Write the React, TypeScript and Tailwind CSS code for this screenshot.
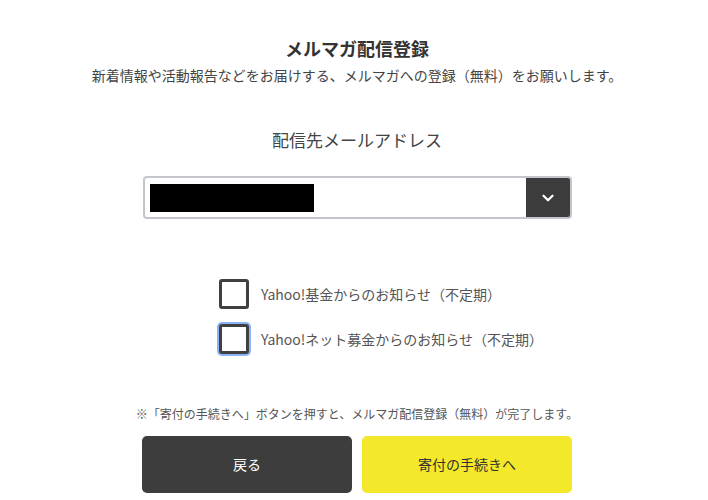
import { ChevronDown } from "lucide-react";

export default function App() {
  return (
    <div
      className="w-[708px] h-[500px] bg-white text-[#333] overflow-hidden"
      style={{ fontFamily: '"Noto Sans CJK JP", "Noto Sans", sans-serif' }}
    >
      <div className="flex flex-col items-center pt-[35px] pl-[6px]">
        <h1 className="text-[18px] leading-[27px] font-bold">メルマガ配信登録</h1>
        <p className="mt-[3px] text-[14px] leading-[20px] text-[#444]">
          新着情報や活動報告などをお届けする、メルマガへの登録（無料）をお願いします。
        </p>

        <p className="mt-[43px] text-[17px] leading-[24px] text-[#444]">配信先メールアドレス</p>

        <div className="mt-[24px] w-[429px] h-[43px] flex border-2 border-[#c3c6cc] rounded-[4px] overflow-hidden">
          <div className="flex-1 flex items-center pl-[5px]">
            <div className="w-[164px] h-[28px] bg-black" />
          </div>
          <div className="w-[44px] bg-[#3c3c3c] flex items-center justify-center">
            <ChevronDown className="w-[18px] h-[18px] text-white" strokeWidth={3} />
          </div>
        </div>

        <div className="mt-[60px] flex flex-col gap-[15px] w-[330px] ml-[54px]">
          <label className="flex items-center gap-[12px]">
            <span className="shrink-0 w-[30px] h-[30px] border-[3px] border-[#404040] rounded-[3px] bg-white" />
            <span className="whitespace-nowrap text-[14px] leading-[20px] text-[#555]">
              Yahoo!基金からのお知らせ（不定期）
            </span>
          </label>
          <label className="flex items-center gap-[12px]">
            <span className="shrink-0 w-[30px] h-[30px] border-[3px] border-[#404040] rounded-[3px] bg-white ring-2 ring-[#8ab4f8]" />
            <span className="whitespace-nowrap text-[14px] leading-[20px] text-[#555]">
              Yahoo!ネット募金からのお知らせ（不定期）
            </span>
          </label>
        </div>

        <p className="mt-[51px] text-[12px] leading-[18px] text-[#555]">
          ※「寄付の手続きへ」ボタンを押すと、メルマガ配信登録（無料）が完了します。
        </p>

        <div className="mt-[13px] flex gap-[10px]">
          <button className="w-[210px] h-[57px] rounded-[5px] bg-[#3d3d3d] text-white text-[14px]">戻る</button>
          <button className="w-[210px] h-[57px] rounded-[5px] bg-[#f3e829] text-[#333] text-[14px]">
            寄付の手続きへ
          </button>
        </div>
      </div>
    </div>
  );
}
